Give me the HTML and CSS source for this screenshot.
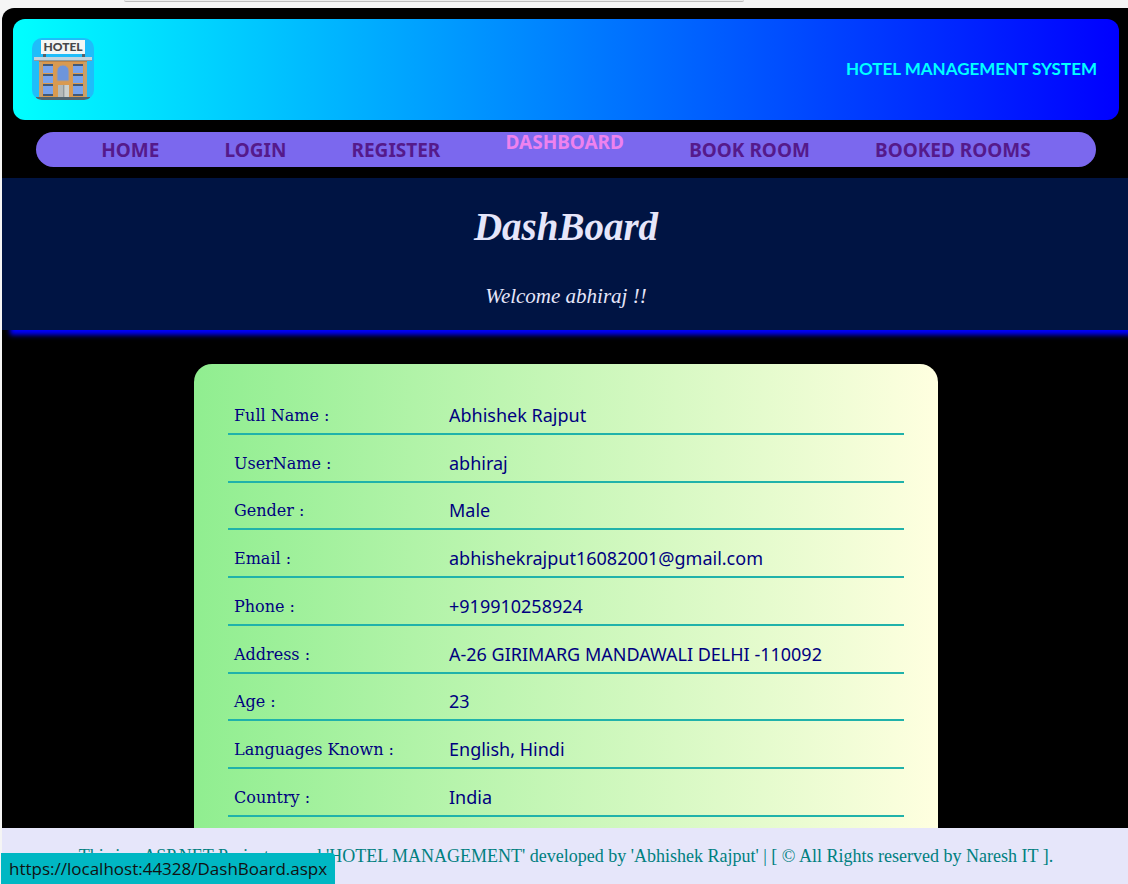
FILE: index.html
```html
<!DOCTYPE html>
<html lang="en">
<head>
<meta charset="utf-8">
<title>DashBoard</title>
<link rel="stylesheet" href="styles.css">
</head>
<body>
<div class="chrome"><div class="address-bar"></div></div>
<div class="page">
  <header class="banner">
    <svg class="logo" viewBox="0 0 62 62" role="img" aria-label="Hotel">
      <defs><clipPath id="tile"><rect width="62" height="62" rx="10"/></clipPath></defs>
      <g clip-path="url(#tile)">
        <rect width="62" height="62" fill="#1fbdfa"/>
        <path d="M11 15h3v6h-3zM50 15h3v6h-3z" fill="#53616b"/>
        <rect x="9" y="2" width="44" height="14" fill="#f4f6f5"/>
        <rect x="7" y="22" width="48" height="38" fill="#d99a50"/>
        <path d="M7 22h48v2H7z" fill="#b98247"/>
        <path d="M7 24h3v35H7zM52 24h3v35h-3z" fill="#c5a06d"/>
        <rect x="2" y="19" width="58" height="4" fill="#c4d4dd"/>
        <path d="M2 22h58v1H2z" fill="#8b9aa1"/>
        <g fill="#79a4ec"><path d="M11 28h10v7H11zM11 38h10v7H11zM11 48h10v8H11zM41 28h10v7H41zM41 38h10v7H41zM41 48h10v8H41z"/></g>
        <g fill="#425978"><path d="M11 26h10v2H11zM11 36h10v2H11zM11 46h10v2H11zM11 56h10v2H11zM41 26h10v2H41zM41 36h10v2H41zM41 46h10v2H41zM41 56h10v2H41z"/></g>
        <path d="M25 43V33a6 6 0 0 1 12 0v10z" fill="#6d95dc" stroke="#c39a70"/>
        <path d="M26 47h11v12H26z" fill="#b5bab9"/>
        <path d="M31 47h1v12h-1z" fill="#929a9c"/>
        <path d="M33 47h4v12h-4z" fill="#cbd0cd"/>
        <path d="M4 59h54v3H4z" fill="#50646f"/>
        <text class="logo-text" x="31" y="13" text-anchor="middle">HOTEL</text>
      </g>
    </svg>
    <div class="brand">HOTEL MANAGEMENT SYSTEM</div>
  </header>
  <nav class="menu">
    <a href="#">HOME</a>
    <a href="#">LOGIN</a>
    <a href="#">REGISTER</a>
    <a href="#" class="active">DASHBOARD</a>
    <a href="#">BOOK ROOM</a>
    <a href="#">BOOKED ROOMS</a>
  </nav>
  <section class="intro">
    <h1>DashBoard</h1>
    <p>Welcome abhiraj !!</p>
  </section>
  <main class="card">
    <table class="profile">
      <tr><th scope="row">Full Name :</th><td>Abhishek Rajput</td></tr>
      <tr><th scope="row">UserName :</th><td>abhiraj</td></tr>
      <tr><th scope="row">Gender :</th><td>Male</td></tr>
      <tr><th scope="row">Email :</th><td>abhishekrajput16082001@gmail.com</td></tr>
      <tr><th scope="row">Phone :</th><td>+919910258924</td></tr>
      <tr><th scope="row">Address :</th><td>A-26 GIRIMARG MANDAWALI DELHI -110092</td></tr>
      <tr><th scope="row">Age :</th><td>23</td></tr>
      <tr><th scope="row">Languages Known :</th><td>English, Hindi</td></tr>
      <tr><th scope="row">Country :</th><td>India</td></tr>
    </table>
  </main>
</div>
<footer class="footer">This is a ASP.NET Project named 'HOTEL MANAGEMENT' developed by 'Abhishek Rajput' | [ © All Rights reserved by Naresh IT ].</footer>
<div class="status">https://localhost:44328/DashBoard.aspx</div>
</body>
</html>
```
FILE: styles.css
```css
* { box-sizing: border-box; }
body {
  margin: 0;
  height: 100vh;
  display: flex;
  flex-direction: column;
  overflow: hidden;
  background: #f5f5f5;
}
.chrome {
  flex: none;
  height: 8px;
  padding: 0 34% 0 11%;
}
.address-bar {
  height: 2px;
  background: #ececec;
  border-bottom: 1px solid #bdbdbd;
  border-radius: 0 0 12px 12px;
}
.page {
  flex: 1;
  min-height: 0;
  margin-left: 2px;
  display: flex;
  flex-direction: column;
  overflow: hidden;
  background: #000;
  border-top-left-radius: 12px;
}
.banner {
  flex: none;
  display: flex;
  align-items: center;
  justify-content: space-between;
  margin: 11px 9px 0 11px;
  padding: 19px 22px 20px 19px;
  border-radius: 12px;
  background: linear-gradient(to right, aqua, blue);
}
.logo { width: 62px; height: 62px; display: block; }
.logo-text { font: 900 12px Lato, sans-serif; fill: #46484a; }
.brand {
  color: aqua;
  font: bold 17px/24px "Trebuchet MS", Lato, sans-serif;
}
.menu {
  flex: none;
  display: flex;
  justify-content: space-evenly;
  align-items: center;
  height: 35px;
  margin: 12px 32px 11px 34px;
  border-radius: 18px;
  background: #7b68ee;
}
.menu a {
  color: #551a8b;
  font: bold 19px/20px "Comic Sans MS", "Noto Sans", sans-serif;
  text-decoration: none;
}
.menu .active { align-self: flex-start; color: violet; }
.intro {
  flex: none;
  position: relative;
  height: 152px;
  padding: 22px 0 0 2px;
  text-align: center;
  color: lavender;
  background: #001443;
  box-shadow: 8px 5px 5px blue;
}
.intro h1 {
  margin: 0 0 24px;
  font: italic bold 39px/54px "Liberation Serif", serif;
}
.intro p {
  margin: 0;
  font: italic 21px/36px "Liberation Serif", serif;
}
.card {
  flex: 1 0 auto;
  margin: 34px 190px 0 192px;
  padding: 23px 34px 34px;
  border-radius: 18px;
  background: linear-gradient(to right, lightgreen, lightyellow);
}
.profile {
  width: 100%;
  height: 430px;
  border-collapse: separate;
  border-spacing: 0;
  color: navy;
}
.profile th, .profile td {
  padding: 10px 0 0 6px;
  text-align: left;
  vertical-align: middle;
  border-bottom: 2px solid lightseagreen;
}
.profile th {
  width: 215px;
  padding-top: 12px;
  font: 16px/24px Rockwell, "DejaVu Serif", serif;
}
.profile td { font: 18px/24px "Comic Sans MS", "Noto Sans", sans-serif; }
.footer {
  flex: none;
  height: 56px;
  margin-left: 2px;
  padding-left: 2px;
  text-align: center;
  white-space: nowrap;
  color: teal;
  background: lavender;
  font: 18px/56px "Liberation Serif", serif;
}
.status {
  position: absolute;
  left: 1px;
  bottom: 0;
  padding: 4px 8px 3px;
  border-top-right-radius: 4px;
  color: #111;
  background: #00b7c3;
  font: 17px/24px "Open Sans", sans-serif;
}
```
